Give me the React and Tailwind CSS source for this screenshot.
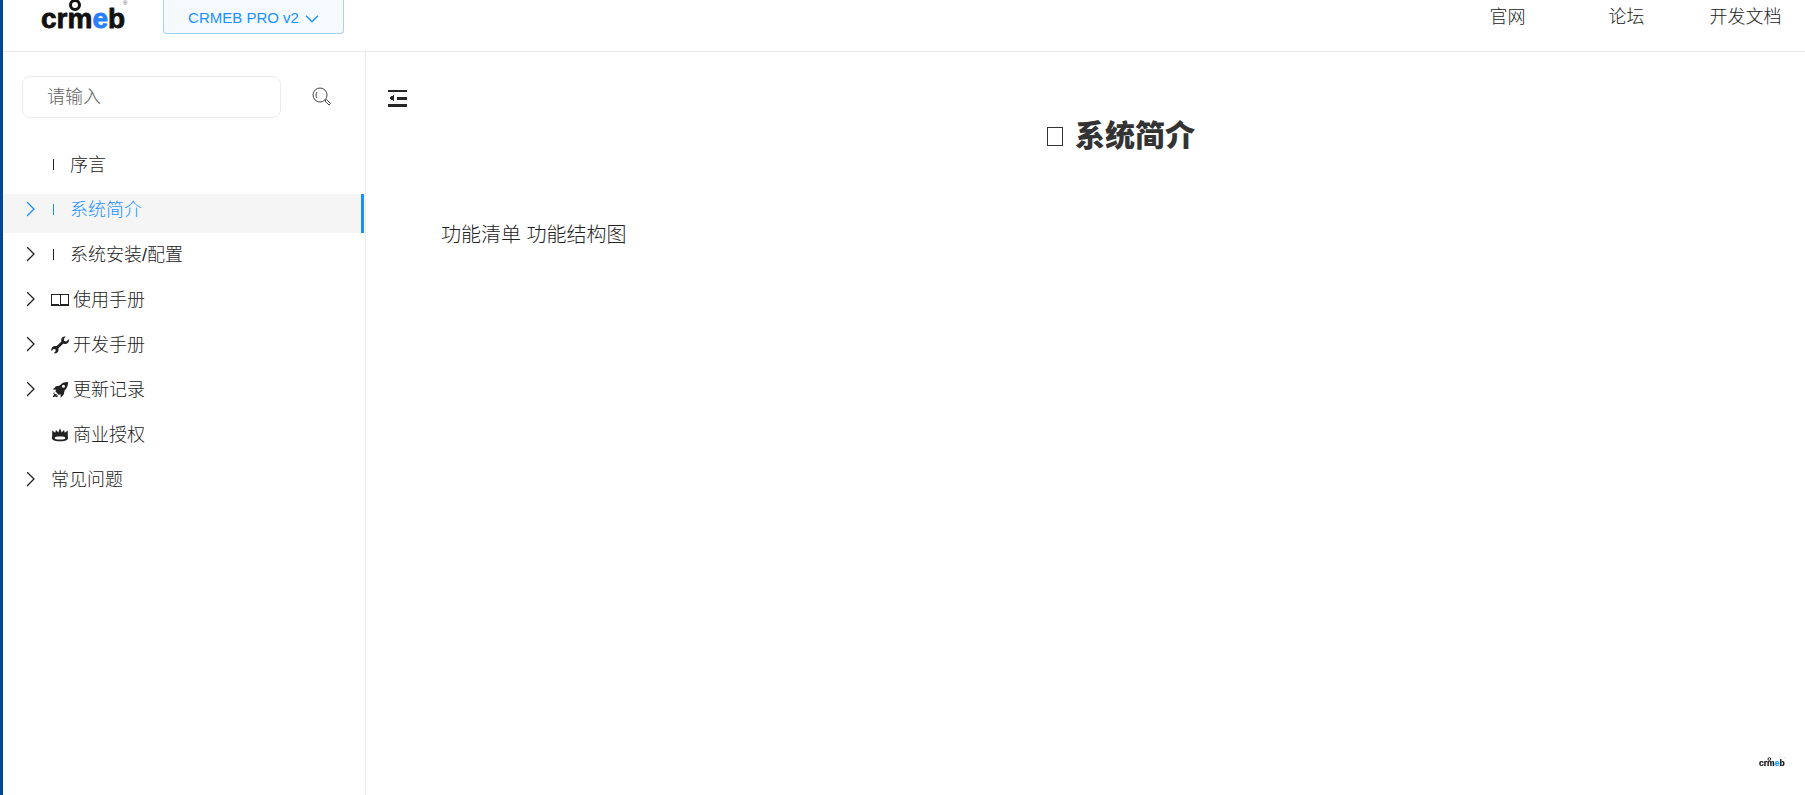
import { useState } from 'react'
import { clsx } from 'clsx'

const links = ['官网', '论坛', '开发文档']

const menu = [
    { title: '序言', icon: 'bar' },
    { title: '系统简介', icon: 'bar', children: true },
    { title: '系统安装/配置', icon: 'bar', children: true },
    { title: '使用手册', icon: 'book', children: true },
    { title: '开发手册', icon: 'wrench', children: true },
    { title: '更新记录', icon: 'rocket', children: true },
    { title: '商业授权', icon: 'crown' },
    { title: '常见问题', children: true },
]

function Logo({ className, accent }) {
    return (
        <svg viewBox="0 0 92 36" className={className} role="img" aria-label="crmeb">
            <circle cx="34" cy="5" r="4.5" fill="none" stroke="#111" strokeWidth="3" />
            <text x="0" y="28" fontSize="28" fontWeight="700" fontFamily="Liberation Sans, sans-serif" fill="#111" stroke="#111" strokeWidth="0.8" strokeLinejoin="round">
                crm<tspan fill={accent} stroke={accent}>e</tspan>b
            </text>
            <text x="82" y="5" fontSize="6" fontFamily="Liberation Sans, sans-serif" fill="#555">®</text>
        </svg>
    )
}

function MenuIcon({ name }) {
    if (name === 'bar') {
        return <span className="mr-4 ml-0.5 h-[11px] w-px bg-current" />
    }
    if (name === 'book') {
        return (
            <svg viewBox="0 0 18 18" className="mr-1 size-[18px]" fill="none" stroke="currentColor" shapeRendering="crispEdges">
                <path d="M.5 3.5h17v11H.5zM9.5 4v10" />
                <path d="M0 14h8M10 14h8" strokeWidth="2" />
            </svg>
        )
    }
    if (name === 'wrench') {
        return (
            <svg viewBox="0 0 18 18" className="mr-1 size-[18px]" fill="currentColor">
                <path d="M14.800.6 12.800 3l.4 2 2 .4 2.500-2.200c.8 2.800-1 5-3.700 4.900l-1.800-.3-4.800 4.400.2 1.500c-.1 2.600-2.600 4.200-5 3.500l2.200-2.300-.4-1.600-1.700-.4L.4 15C-.2 12.200 1.500 9.800 4.100 9.900l1.600.2 4.700-4.500-.2-1.400C10 1.800 12.400-.1 14.800.6z" />
            </svg>
        )
    }
    if (name === 'rocket') {
        return (
            <svg viewBox="0 0 18 18" className="mr-1 size-[18px]" fill="currentColor">
                <path fillRule="evenodd" d="M17 1c-3.500-.2-6 .9-8.200 3.400L5 5.200 1.800 8.400l3.400.4-.9 1.500 3.600 3.600 1.500-.9.4 3.700 3-3.400.8-3.900C16 7.200 17.200 4.700 17 1zM12.500 3.800a1.500 1.500 0 1 1 0 3 1.500 1.500 0 0 1 0-3z" />
                <path d="M3.500 11.200 1.900 12.500l1.400.6L1.500 16.300l3.500-.7.900 1 1.200-2.200-1.600.2.300-1.400-2.200-.1z" />
            </svg>
        )
    }
    return (
        <svg viewBox="0 0 18 18" className="mr-1 size-[18px]" fill="currentColor">
            <path fillRule="evenodd" d="M1.200 4.500 4.200 6.800 5 4l2.300 2.500L9 2.200l1.700 4.300L13 4l.8 2.800 3-2.300v5.700c.6 1.200.4 2.700-.6 3.600-2.700 2-11.700 2-14.400 0-1-.9-1.200-2.400-.6-3.600zM9 10.600c-3.400 0-5.300.4-5.300 1.400s1.900 1.500 5.300 1.500 5.300-.5 5.300-1.500-1.900-1.400-5.300-1.400z" />
        </svg>
    )
}

function Sidebar() {
    const [active, setActive] = useState('系统简介')

    return (
        <aside className="w-[363px] shrink-0 border-r border-[#ebebeb] pt-6">
            <form className="flex items-center pl-[19px]" onSubmit={e => e.preventDefault()}>
                <input
                    type="text"
                    aria-label="请输入"
                    placeholder="请输入"
                    className="h-[42px] w-[259px] rounded-lg border border-[#ebebeb] px-6 text-lg font-light outline-none placeholder:text-[#606060]"
                />
                <button type="submit" aria-label="搜索" className="ml-[31px]">
                    <svg viewBox="0 0 20 20" className="size-5" fill="none" stroke="#444">
                        <circle cx="8" cy="8" r="7" />
                        <path d="M5 5c-1.300 1.700-1.300 4.300 0 6M13 14l4 4 1.500-1.500-4-4z" />
                    </svg>
                </button>
            </form>

            <nav className="mt-[31px] mr-px flex flex-col gap-1.5">
                {menu.map(item => (
                    <button
                        key={item.title}
                        type="button"
                        onClick={() => setActive(item.title)}
                        className={clsx(
                            'flex h-[39px] items-center border-r-3 pb-2 pl-6 text-lg font-light',
                            active === item.title ? 'border-[#1890ff] bg-[#f5f5f5] text-[#1890ff]' : 'border-transparent'
                        )}
                    >
                        <span className="w-6">
                            {item.children && (
                                <svg viewBox="0 0 8 16" className="h-4 w-2" fill="none" stroke="currentColor" strokeWidth="1.300">
                                    <path d="M0 0l7 7-7 7" />
                                </svg>
                            )}
                        </span>
                        {item.icon && <MenuIcon name={item.icon} />}
                        {item.title}
                    </button>
                ))}
            </nav>
        </aside>
    )
}

export default function App() {
    return (
        <div
            className="flex min-h-screen flex-col border-l-3 border-[#034694] bg-white text-[#222]"
            style={{ fontFamily: '"Liberation Sans", "Noto Sans CJK SC", sans-serif' }}
        >
            <header className="flex h-[52px] items-start border-b border-[#ebebeb]">
                <a href="#" className="ml-[38px]">
                    <Logo className="h-9 w-[92px]" accent="#2a7fff" />
                </a>
                <button
                    type="button"
                    className="ml-[30px] flex h-[34px] w-[181px] items-center justify-center gap-1.5 rounded-b border border-t-0 border-[#a3d3ff] bg-[#f5faff] pt-1 text-[15px] text-[#1890ff]"
                >
                    CRMEB PRO v2
                    <svg viewBox="0 0 14 8" className="h-2 w-3.5" fill="none" stroke="currentColor" strokeWidth="1.300">
                        <path d="M1 .8l6 6 6-6" />
                    </svg>
                </button>
                <nav className="ml-auto flex pt-1 text-lg leading-[26px] font-light">
                    {links.map(link => (
                        <a key={link} href="#" className="w-[119px] text-center">{link}</a>
                    ))}
                </nav>
            </header>

            <div className="flex flex-1">
                <Sidebar />

                <main className="min-w-0 flex-1 pt-9 pr-1 pl-[22px]">
                    <button type="button" aria-label="收起菜单" className="block">
                        <svg viewBox="0 0 19 20" className="h-5 w-[19px]" fill="#262626" shapeRendering="crispEdges">
                            <path d="M0 2h19v2H0zM9 9h10v3H9zM0 16h19v3H0zM1 10l5-3v6z" />
                        </svg>
                    </button>
                    <div className="pl-[53px]">
                        <h1 className="mt-2 flex items-center justify-center gap-3 text-3xl leading-10 font-black text-[#333]">
                            <span className="h-[19px] w-4 border border-[#333]" />
                            系统简介
                        </h1>
                        <p className="mt-[65px] text-xl font-light">功能清单 功能结构图</p>
                    </div>
                </main>
            </div>

            <a href="#" className="fixed right-[18px] bottom-[26px]">
                <Logo className="h-3 w-7" accent="#1ba1e6" />
            </a>
        </div>
    )
}
